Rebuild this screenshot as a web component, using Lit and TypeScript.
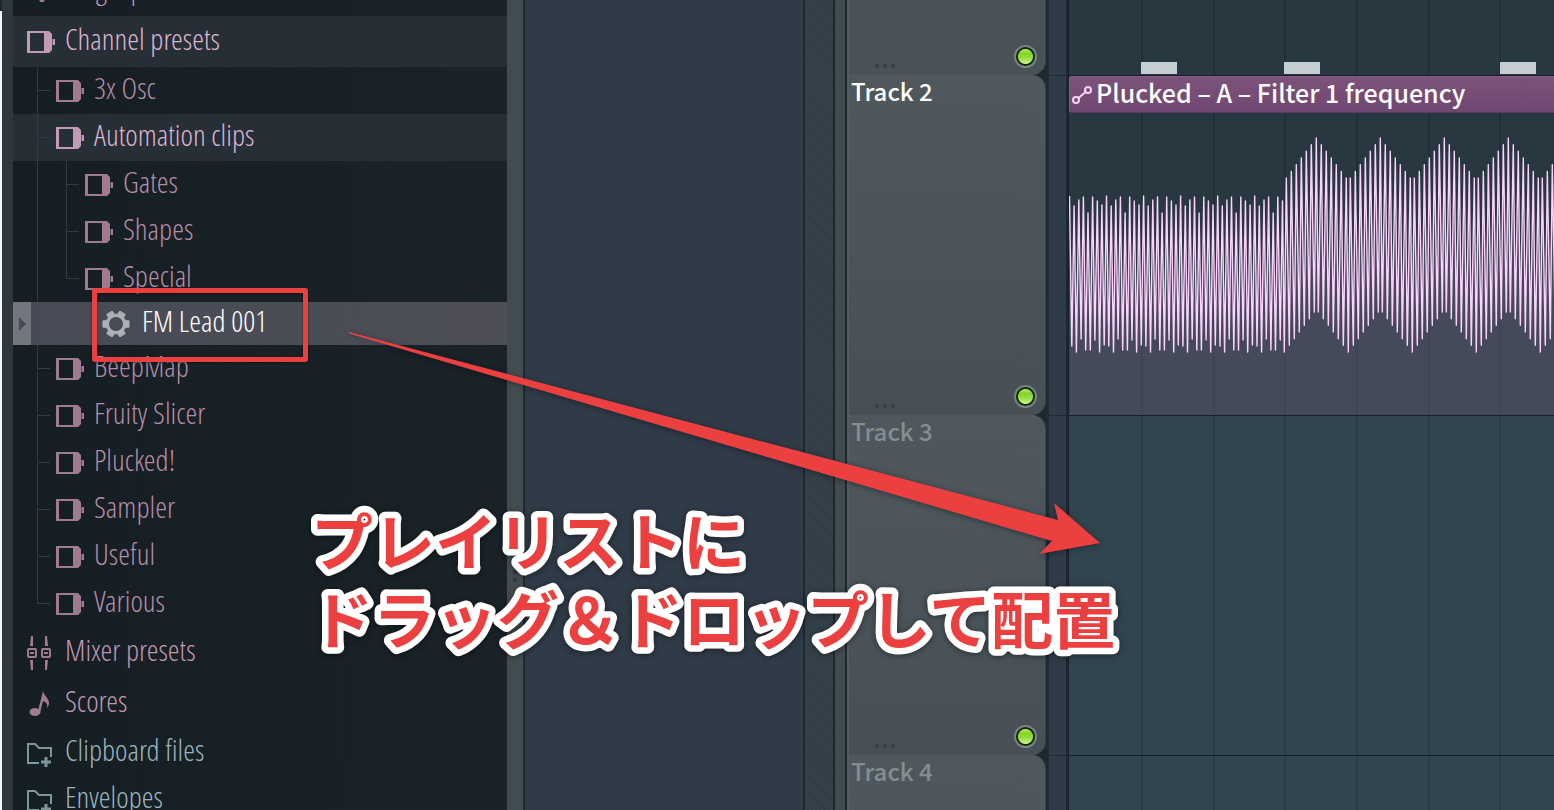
import { LitElement, html, svg, css, nothing } from "lit";
import { customElement, property } from "lit/decorators.js";

type IconName = "plug" | "channel" | "gear" | "mixer" | "note" | "folder";
type Guide = "line" | "tee" | "elbow";

interface Row {
  label: string;
  icon: IconName;
  tone?: "blue";
  tall?: boolean;
  open?: boolean;
  selected?: boolean;
  guides?: Guide[];
}

const ROWS: Row[] = [
  { label: "Plugin presets", icon: "plug", tall: true },
  { label: "Channel presets", icon: "channel", tall: true, open: true },
  { label: "3x Osc", icon: "channel", guides: ["tee"] },
  { label: "Automation clips", icon: "channel", open: true, guides: ["tee"] },
  { label: "Gates", icon: "channel", guides: ["line", "tee"] },
  { label: "Shapes", icon: "channel", guides: ["line", "tee"] },
  { label: "Special", icon: "channel", guides: ["line", "elbow"] },
  { label: "FM Lead 001", icon: "gear", selected: true },
  { label: "BeepMap", icon: "channel", guides: ["tee"] },
  { label: "Fruity Slicer", icon: "channel", guides: ["tee"] },
  { label: "Plucked!", icon: "channel", guides: ["tee"] },
  { label: "Sampler", icon: "channel", guides: ["tee"] },
  { label: "Useful", icon: "channel", guides: ["tee"] },
  { label: "Various", icon: "channel", guides: ["elbow"] },
  { label: "Mixer presets", icon: "mixer", tall: true },
  { label: "Scores", icon: "note", tall: true },
  { label: "Clipboard files", icon: "folder", tone: "blue" },
  { label: "Envelopes", icon: "folder", tone: "blue" },
];

const gearPath = (): string => {
  const pts: string[] = [];
  const teeth = 6;
  for (let i = 0; i < teeth; i++) {
    const mid = (i * 2 * Math.PI) / teeth;
    const steps: [number, number][] = [
      [-0.34, 10],
      [-0.24, 13.4],
      [0.24, 13.4],
      [0.34, 10],
    ];
    for (const [da, r] of steps) {
      pts.push(`${(14 + r * Math.cos(mid + da)).toFixed(2)} ${(14 + r * Math.sin(mid + da)).toFixed(2)}`);
    }
  }
  return `M${pts.join("L")}Z M21.500 14A7.500 7.500 0 1 0 6.500 14A7.500 7.500 0 1 0 21.500 14Z`;
};

const ICONS = {
  plug: svg`<path d="M8 0h12v16l-3 9h-4l-3-9z" fill="currentColor"/>`,
  channel: svg`<path fill="currentColor" fill-rule="evenodd" d="M0 3h22l3 3v16l-3 3H0zM3 5v18h14V5z"/><path fill="currentColor" d="M25.500 11h2.500v6h-2.500z"/>`,
  gear: svg`<path fill="currentColor" fill-rule="evenodd" stroke="currentColor" stroke-linejoin="round" d=${gearPath()}/>`,
  mixer: svg`<g fill="none" stroke="currentColor" stroke-width="2"><rect x="1" y="10" width="8" height="8" rx="1"/><rect x="15" y="10" width="8" height="8" rx="1"/><path d="M3 14h4M17 14h4"/></g><path fill="currentColor" d="M4-3h2v10H3zM18-3h2l1 10h-3zM3 21h3v10H4zM18 21h3l-1 10h-2z"/>`,
  note: svg`<ellipse cx="8" cy="22" rx="5.500" ry="4" fill="currentColor"/><path fill="currentColor" d="M16 1c1 5 6 7 6 12 0 2-1 4-2 5 1-4-1-6-4-7l-3 12-2-2z"/>`,
  folder: svg`<path fill="none" stroke="currentColor" stroke-width="2" d="M12 24H1V5h7l4 4h12v9"/><path fill="none" stroke="currentColor" stroke-width="3" d="M14 23h10M19 18v10"/>`,
};

@customElement("tree-row")
class TreeRow extends LitElement {
  @property({ attribute: false }) row!: Row;

  static styles = css`
    :host {
      display: block;
    }
    .row {
      display: flex;
      align-items: stretch;
      width: 100%;
      height: 47px;
      padding: 0 0 0 14px;
      border: 0;
      background: none;
      color: #b58ca6;
      font: inherit;
      text-align: left;
      white-space: nowrap;
    }
    .row .icon {
      color: #a07a92;
    }
    .tall {
      height: 51px;
      color: #c195b1;
    }
    .nested {
      padding-left: 24px;
    }
    .open {
      background: #252f35;
      color: #ddb3d1;
    }
    .open .icon {
      color: #c39ab6;
    }
    .blue {
      color: #9cb4bc;
    }
    .blue .icon {
      color: #7d959d;
    }
    .guide {
      position: relative;
      flex: none;
      width: 28px;
      border-left: 1px solid #323d43;
    }
    .guide:last-of-type {
      width: 18px;
    }
    .tee::before,
    .elbow::before {
      content: "";
      position: absolute;
      left: 0;
      top: 23px;
      width: 12px;
      height: 1px;
      background: #323d43;
    }
    .elbow {
      height: 24px;
    }
    .icon {
      align-self: center;
      flex: none;
      width: 28px;
      height: 28px;
      margin-right: 10px;
      overflow: visible;
    }
    .label {
      align-self: center;
      line-height: 40px;
      padding-bottom: 6px;
    }
    .selected {
      height: 43px;
      padding: 0;
      background: linear-gradient(90deg, #474b55, #4d4e57);
      color: #fff;
      align-items: center;
    }
    .selected .icon {
      color: #aeb0b8;
      margin-left: 71px;
      margin-right: 12px;
    }
    .grip {
      display: grid;
      place-items: center;
      align-self: stretch;
      width: 18px;
      background: #73767e;
      color: #464a54;
    }
  `;

  render() {
    const r = this.row;
    const guides = r.guides ?? [];
    const cls = [
      "row",
      r.tall ? "tall" : "",
      r.open ? "open" : "",
      guides.length ? "nested" : "",
      r.tone === "blue" ? "blue" : "",
      r.selected ? "selected" : "",
    ].join(" ");
    return html`<button class=${cls} type="button">
      ${r.selected
        ? html`<span class="grip"><svg width="8" height="14"><path d="M1 0l7 7-7 7z" fill="currentColor" /></svg></span>`
        : guides.map((g) => html`<i class="guide ${g}"></i>`)}
      <svg class="icon" viewBox="0 0 28 28" aria-hidden="true">${ICONS[r.icon]}</svg>
      <span class="label">${r.label}</span>
    </button>`;
  }
}

/** Automation curve of the clip, relative to the top left corner of its body. */
const curvePoints = (): string => {
  const pts: [number, number][] = [];
  const tops = [83, 93, 87, 84, 100, 84, 88, 92];
  const bottoms = [233, 239, 226, 237, 237, 227, 239, 232];
  const step = 4.63;
  for (let i = 0; i < 47; i++) {
    pts.push([0.5 + i * step, tops[i % 8]]);
    pts.push([2.8 + i * step, bottoms[i % 8]]);
  }
  const wave: [number, number][] = [];
  for (let k = 0; k < 24; k++) {
    for (let i = -6; i <= 6; i++) {
      const dy = Math.abs(i) * 6.67;
      wave.push([247.3 + k * 64 + i * 5, 25 + dy]);
      if (k > 0 || i >= 0) wave.push([215.3 + k * 64 + i * 5, 239 - dy]);
    }
  }
  wave.sort((a, b) => a[0] - b[0]);
  return [...pts.filter((p) => p[0] < 214), ...wave].map((p) => `${p[0].toFixed(1)},${p[1].toFixed(1)}`).join(" ");
};

@customElement("automation-clip")
class AutomationClip extends LitElement {
  static styles = css`
    :host {
      display: flex;
      flex-direction: column;
      height: 100%;
    }
    .title {
      display: flex;
      align-items: center;
      gap: 4px;
      height: 37px;
      box-sizing: border-box;
      padding: 0 0 2px 2px;
      border: 1px solid #8b5a86;
      border-bottom-color: #5c3a5d;
      border-right: 0;
      border-radius: 3px 0 0 3px;
      background: linear-gradient(#7d527b, #6f4770);
      color: #fff;
      font-size: 25px;
      line-height: 32px;
      white-space: nowrap;
    }
    .text {
      padding-bottom: 4px;
    }
    .link {
      flex: none;
      width: 20px;
      height: 20px;
    }
    .curve {
      flex: 1;
      width: 100%;
      min-height: 0;
      overflow: hidden;
    }
  `;

  render() {
    const pts = curvePoints();
    return html`<div class="title">
        <svg class="link" viewBox="0 0 20 20" fill="none" stroke="#f6d3f6" stroke-width="2" aria-hidden="true">
          <circle cx="4" cy="16" r="3" /><circle cx="16" cy="6" r="3" /><path d="M6.500 14l7-6" />
        </svg>
        <span class="text">Plucked – A – Filter 1 frequency</span>
      </div>
      <svg class="curve" aria-hidden="true">
        <polygon points="0.5,400 ${pts} 1800,400" fill="#a585b0" fill-opacity="0.24" />
        <polyline points=${pts} fill="none" stroke="#fdd3fd" stroke-width="1.4" stroke-linejoin="round" />
      </svg>`;
  }
}

@customElement("track-lane")
class TrackLane extends LitElement {
  @property() name = "";
  @property({ type: Boolean }) dim = false;
  @property({ type: Boolean }) used = false;

  static styles = css`
    :host {
      display: grid;
      grid-template-columns: 199px 22px minmax(0, 1fr);
      min-height: 0;
    }
    .head {
      display: flex;
      flex-direction: column;
      justify-content: space-between;
      border-left: 2px solid #545e64;
      border-radius: 0 14px 14px 0;
      background: linear-gradient(#4e585d, #465056);
      border-right: 1px solid #3b464c;
    }
    .first {
      border-top-right-radius: 0;
      background: #485257;
    }
    .name {
      padding-left: 2px;
      line-height: 32px;
      color: #fff;
    }
    .dim .name {
      color: #868d92;
    }
    .foot {
      display: flex;
      align-items: flex-end;
      justify-content: space-between;
      margin-top: auto;
      padding: 0 8px 7px 26px;
    }
    .dots {
      display: flex;
      gap: 4px;
    }
    .dots i {
      width: 4px;
      height: 4px;
      background: #384147;
    }
    .led {
      appearance: none;
      width: 23px;
      height: 23px;
      margin: 0;
      box-sizing: border-box;
      border: 2px solid #7b8285;
      border-radius: 50%;
      background: radial-gradient(circle at 50% 50%, transparent 7px, #0f2a08 8px),
        linear-gradient(#c8f57a, #84d228 35%, #9be047 60%, #e2fbb0);
    }
    .gap {
      border-left: 3px solid #1e2b34;
      border-right: 2px solid #1b2830;
      background: #2f3c48;
      border-top: 1px solid #1e2b34;
    }
    .lane {
      position: relative;
      border-top: 1px solid #14212a;
      border-left: 1px solid #14212a;
      background: repeating-linear-gradient(
          90deg,
          transparent 0 70px,
          #293d47 70px 72px,
          transparent 72px 142px,
          #293d47 142px 144px,
          transparent 144px 213px,
          #293d47 213px 215px
        )
        2px 0 #31454f;
    }
    .used {
      background: repeating-linear-gradient(
          90deg,
          transparent 0 70px,
          #213038 70px 72px,
          transparent 72px 142px,
          #213038 142px 144px,
          transparent 144px 213px,
          #213038 213px 215px
        )
        2px 0 #283840;
    }
    .first-row {
      border-top: 0;
    }
  `;

  render() {
    const first = !this.name;
    return html`<div class="head ${this.dim ? "dim" : ""} ${first ? "first" : ""}">
        ${first ? nothing : html`<span class="name">${this.name}</span>`}
        <div class="foot">
          <span class="dots"><i></i><i></i><i></i></span>
          <input class="led" type="checkbox" checked aria-label="Enable ${this.name || "track"}" />
        </div>
      </div>
      <div class="gap ${first ? "first-row" : ""}"></div>
      <div class="lane ${this.used ? "used" : ""} ${first ? "first-row" : ""}"><slot></slot></div>`;
  }
}

@customElement("app-root")
class AppRoot extends LitElement {
  static styles = css`
    :host {
      position: relative;
      display: grid;
      grid-template-columns: 2px 11px 494px 16px 2px 278px 2px 28px 2px 10px 2px minmax(0, 1fr);
      grid-template-rows: minmax(0, 1fr);
      height: 100vh;
      overflow: hidden;
      background: #1d2932;
      font-family: "Open Sans Condensed Light", "Open Sans Condensed", "Liberation Sans Narrow", sans-serif;
      font-weight: 300;
      font-size: 30px;
    }
    .page {
      margin-top: 11px;
      background: #f4f6f7;
    }
    .edge {
      background: #2e373d;
    }
    .browser {
      overflow: hidden;
      background: linear-gradient(90deg, #141e23, #192328);
    }
    .tree {
      list-style: none;
      margin: -35px 0 0;
      padding: 0;
    }
    .splitter {
      display: flex;
      flex-direction: column;
      align-items: center;
      justify-content: center;
      gap: 4px;
      padding-top: 334px;
      background: #434d51;
    }
    .splitter i {
      width: 4px;
      height: 4px;
      background: #30393d;
    }
    .rule {
      background: #1d2932;
    }
    .picker {
      background: #303b48;
    }
    .hatch {
      background: repeating-linear-gradient(45deg, #35424a 0 2px, #303c44 2px 3px);
    }
    .bar {
      background: #414b50;
    }
    .playlist {
      display: grid;
      grid-template-rows: 75px 340px 340px 340px;
      font-family: "Noto Sans CJK JP", sans-serif;
      font-weight: 500;
      font-size: 24px;
    }
    .note {
      position: absolute;
      bottom: 1px;
      width: 36px;
      height: 12px;
      background: #c5cdd3;
    }
    .n1 {
      left: 72px;
    }
    .n2 {
      left: 215px;
    }
    .n3 {
      left: 431px;
    }
    .box {
      position: absolute;
      left: 92px;
      top: 288px;
      width: 216px;
      height: 74px;
      box-sizing: border-box;
      border: 5px solid #ec4040;
      border-radius: 3px;
      filter: drop-shadow(0 1px 1px rgb(0 0 0 / 0.4));
    }
    .arrow {
      position: absolute;
      left: 340px;
      top: 320px;
      width: 780px;
      height: 250px;
      overflow: visible;
      filter: drop-shadow(0 1px 3px rgb(0 0 0 / 0.4));
    }
    .caption {
      position: absolute;
      left: 311px;
      top: 500px;
      width: 820px;
      height: 170px;
      overflow: visible;
      font: 700 62px/78px "Noto Sans CJK JP", sans-serif;
      fill: #ec4040;
      stroke: #fff;
      stroke-width: 13px;
      stroke-linejoin: round;
      paint-order: stroke fill;
      filter: drop-shadow(0 1px 3px rgb(0 0 0 / 0.45));
    }
  `;

  render() {
    return html`
      <div class="page"></div>
      <div class="edge"></div>
      <nav class="browser" aria-label="Browser">
        <ul class="tree">
          ${ROWS.map((row) => html`<li><tree-row .row=${row}></tree-row></li>`)}
        </ul>
      </nav>
      <div class="splitter"><i></i><i></i><i></i></div>
      <div class="rule"></div>
      <div class="picker"></div>
      <div class="rule"></div>
      <div class="hatch"></div>
      <div class="rule"></div>
      <div class="bar"></div>
      <div class="rule"></div>
      <main class="playlist">
        <track-lane used>
          <span class="note n1"></span><span class="note n2"></span><span class="note n3"></span>
        </track-lane>
        <track-lane name="Track 2" used><automation-clip></automation-clip></track-lane>
        <track-lane name="Track 3" dim></track-lane>
        <track-lane name="Track 4" dim></track-lane>
      </main>
      <div class="box"></div>
      <svg class="arrow" viewBox="340 320 780 250" aria-hidden="true">
        <path d="M349 332L1058 520L1054 503L1100 543L1039 554L1052 541L349 333.500Z" fill="#ec4040" />
      </svg>
      <svg class="caption">
        <text x="0" y="66">プレイリストに</text>
        <text x="0" y="144">ドラッグ＆ドロップして配置</text>
      </svg>
    `;
  }
}
